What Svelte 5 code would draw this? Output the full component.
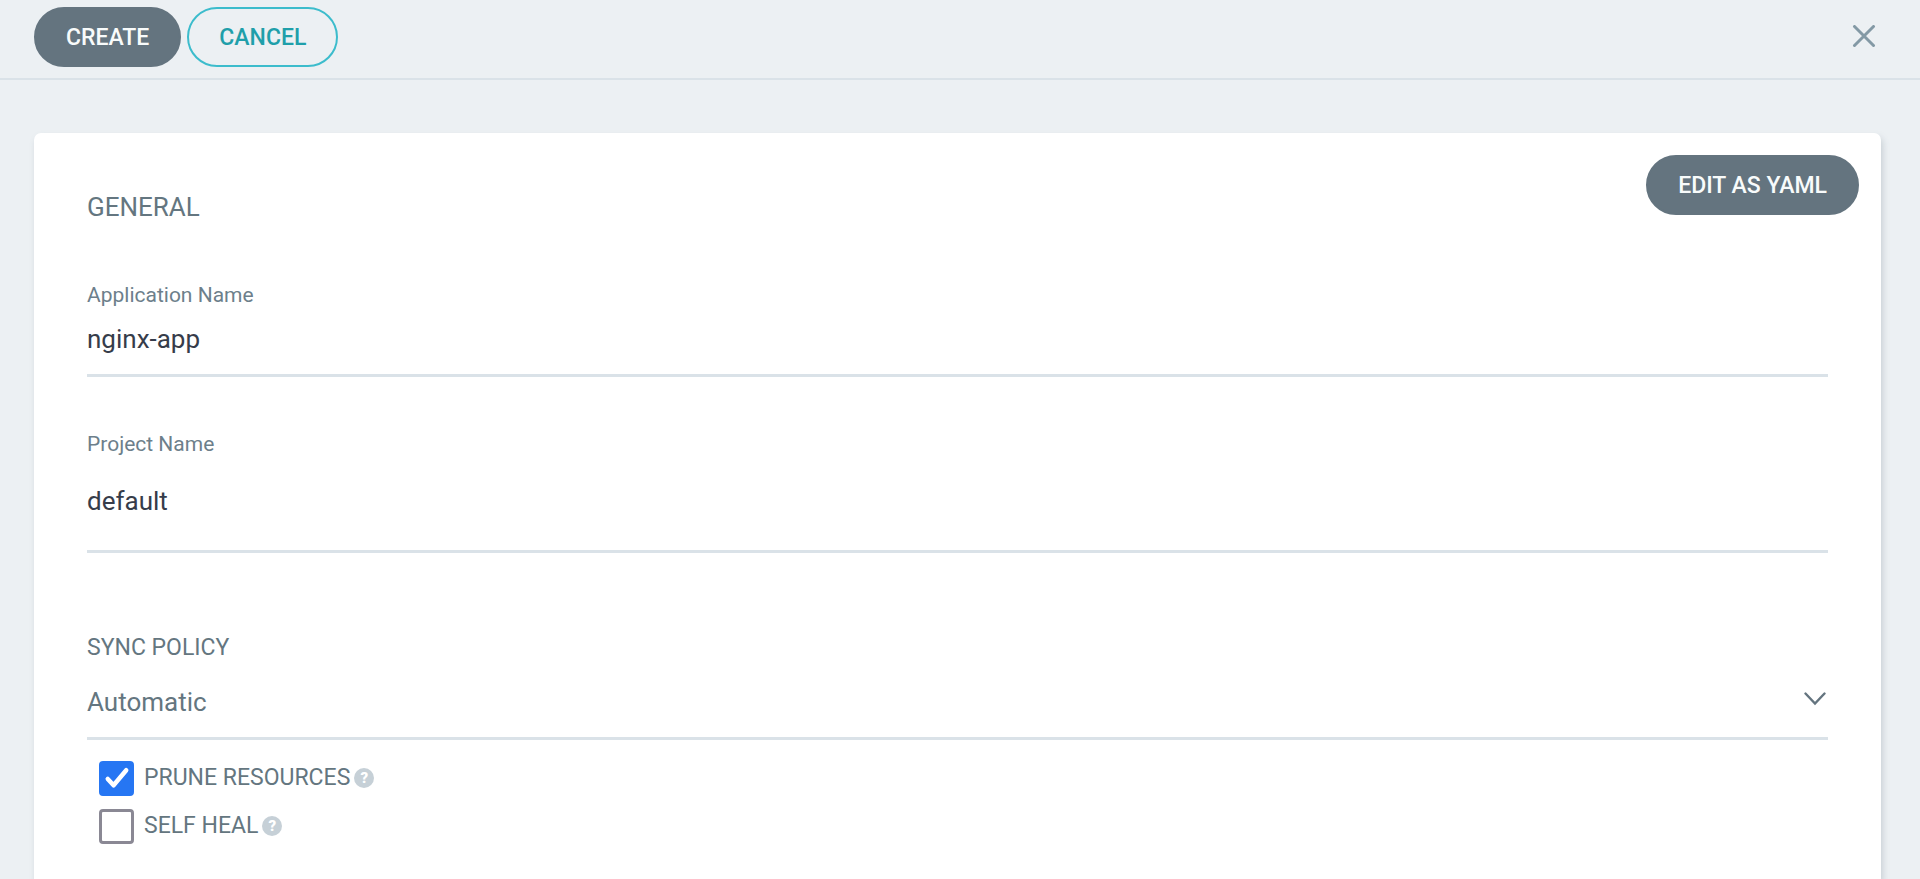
<script lang="ts">
	let appName = $state('nginx-app');
	let project = $state('default');
	let policy = $state('Automatic');

	let options = $state([
		{ id: 'prune', label: 'PRUNE RESOURCES', checked: true },
		{ id: 'self-heal', label: 'SELF HEAL', checked: false }
	]);
</script>

<div class="page">
	<header class="toolbar">
		<button type="button" class="btn btn-base">CREATE</button>
		<button type="button" class="btn btn-outline">CANCEL</button>
		<button type="button" class="close" aria-label="Close">
			<svg viewBox="0 0 24 24" width="24" height="24">
				<path d="M2.5 1.5 21.5 20.5M21.5 1.5 2.5 20.5" />
			</svg>
		</button>
	</header>

	<main class="card">
		<div class="card-head">
			<h1>GENERAL</h1>
			<button type="button" class="btn btn-base">EDIT AS YAML</button>
		</div>

		<form class="fields">
			<div class="field">
				<label for="app-name">Application Name</label>
				<input id="app-name" type="text" bind:value={appName} />
			</div>

			<div class="field">
				<label for="project">Project Name</label>
				<input id="project" class="tall" type="text" bind:value={project} />
			</div>

			<div class="policy">
				<label for="policy">SYNC POLICY</label>
				<div class="select">
					<select id="policy" bind:value={policy}>
						<option>Automatic</option>
						<option>Manual</option>
					</select>
					<svg class="arrow" viewBox="0 0 22 14" width="22" height="14">
						<path d="M1.5 1.5 11 11.5 20.5 1.5" />
					</svg>
				</div>
			</div>

			<div class="options">
				{#each options as option (option.id)}
					<div class="option">
						<input id={option.id} type="checkbox" bind:checked={option.checked} />
						<label for={option.id}>{option.label}</label>
						<span class="help">?</span>
					</div>
				{/each}
			</div>
		</form>
	</main>
</div>

<style>
	:global(body) {
		background: #ecf0f3;
	}

	.page {
		display: flex;
		flex-direction: column;
		min-height: 100vh;
		box-sizing: border-box;
		font-family: Roboto, 'Liberation Sans', sans-serif;
		color: #647680;
	}

	button,
	input,
	select {
		font-family: inherit;
	}

	.toolbar {
		display: flex;
		align-items: center;
		gap: 6px;
		padding: 7px 40px 11px 34px;
		border-bottom: 2px solid #dae2e8;
	}

	.btn {
		height: 60px;
		padding: 0 30px;
		border: 2px solid transparent;
		border-radius: 30px;
		font-size: 23px;
		font-weight: 500;
		cursor: pointer;
	}

	.btn-base {
		background: #64747f;
		border-color: #64747f;
		color: #f8fbfb;
	}

	.btn-outline {
		background: transparent;
		border-color: #3cbccc;
		color: #1f9faa;
	}

	.close {
		display: flex;
		margin-left: auto;
		padding: 4px;
		border: 0;
		background: none;
		cursor: pointer;
	}

	.close path {
		fill: none;
		stroke: #8399a5;
		stroke-width: 3;
		stroke-linecap: round;
	}

	.card {
		flex: 1;
		margin: 53px 39px 0 34px;
		background: #fff;
		border-radius: 7px 7px 0 0;
		box-shadow: 2px 4px 6px rgba(100, 116, 127, 0.25);
	}

	.card-head {
		display: flex;
		justify-content: space-between;
		padding: 22px 22px 0 53px;
	}

	h1 {
		margin: 36px 0 0;
		font-size: 26px;
		font-weight: 400;
		line-height: 32px;
	}

	.fields {
		padding: 60px 53px 36px;
	}

	.field {
		margin-bottom: 55px;
	}

	.field label,
	.policy label {
		display: block;
		font-size: 21px;
		line-height: 24px;
		color: #6d7f8b;
	}

	.field input,
	select {
		display: block;
		width: 100%;
		height: 70px;
		box-sizing: border-box;
		padding: 0 0 4px;
		border: 0;
		border-bottom: 3px solid #dae2e8;
		border-radius: 0;
		background: transparent;
		font-size: 26px;
		color: #363c4a;
		outline: none;
	}

	.field input.tall {
		height: 97px;
	}

	.policy {
		margin-top: 81px;
	}

	.policy label {
		font-size: 23px;
		line-height: 28px;
		color: #647680;
	}

	.select {
		position: relative;
	}

	select {
		height: 78px;
		padding: 4px 0 0;
		appearance: none;
		color: #647680;
	}

	.arrow {
		position: absolute;
		top: 30px;
		right: 2px;
		pointer-events: none;
	}

	.arrow path {
		fill: none;
		stroke: #64747f;
		stroke-width: 2.4;
		stroke-linecap: round;
	}

	.options {
		display: flex;
		flex-direction: column;
		gap: 12px;
		margin: 20px 0 0 12px;
	}

	.option {
		display: flex;
		align-items: center;
		font-size: 23px;
		line-height: 36px;
	}

	.option input {
		appearance: none;
		width: 35px;
		height: 35px;
		box-sizing: border-box;
		margin: 0 10px 0 0;
		border: 3px solid #8a8894;
		border-radius: 4px;
		background: #fff;
	}

	.option input:checked {
		border-color: #2676f3;
		background: #2676f3
			url("data:image/svg+xml,%3Csvg xmlns='http://www.w3.org/2000/svg' viewBox='0 0 36 36'%3E%3Cpath d='M9 18.5 15 25 28 9.5' fill='none' stroke='white' stroke-width='4.6' stroke-linecap='round' stroke-linejoin='round'/%3E%3C/svg%3E")
			center / 35px 35px no-repeat;
	}

	.help {
		width: 20px;
		height: 20px;
		margin-left: 4px;
		border-radius: 50%;
		background: #c6d0d7;
		color: #fff;
		font-size: 15px;
		font-weight: 900;
		line-height: 20px;
		text-align: center;
	}
</style>
